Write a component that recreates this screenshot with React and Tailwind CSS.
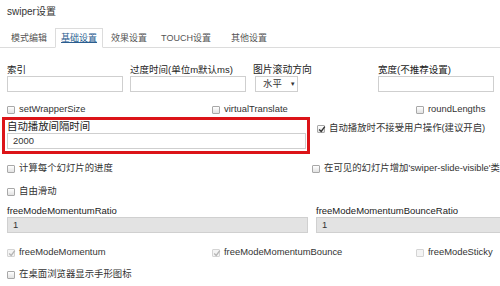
import React from 'react';

const font = { fontFamily: '"Liberation Sans", "Noto Sans CJK SC", sans-serif' };

function Box({ checked, disabled }) {
  return (
    <span
      className={
        'relative inline-block w-[8px] h-[8px] shrink-0 rounded-[1px] border ' +
        (disabled ? 'border-[#d4d4d4] bg-[#f4f4f4]' : 'border-[#a8a8a8] bg-gradient-to-b from-white to-[#e2e2e2]')
      }
    >
      {checked && (
        <svg viewBox="0 0 10 10" className="absolute left-[0px] top-[-1px] w-[8px] h-[8px]">
          <path
            d="M1.5 5.5 L4 8 L8.5 2"
            fill="none"
            stroke={disabled ? '#b5b5b5' : '#333'}
            strokeWidth="1.7"
          />
        </svg>
      )}
    </span>
  );
}

function Check({ label, checked, disabled, className = '' }) {
  return (
    <div className={'flex items-center h-[13px] ' + className}>
      <Box checked={checked} disabled={disabled} />
      <span className="ml-[4px] whitespace-nowrap text-[9.4px] text-[#333]">{label}</span>
    </div>
  );
}

function Field({ label, w, value, disabled, className = '' }) {
  return (
    <div className={className}>
      <div className="h-[12px] leading-[12px] text-[9.5px] text-[#222] whitespace-nowrap">{label}</div>
      <div
        className={
          'h-[16px] border leading-[14px] pl-[5px] text-[9.4px] text-[#333] ' +
          (disabled ? 'bg-[#e3e3e3] border-[#d0d0d0]' : 'bg-white border-[#cfcfcf]')
        }
        style={{ width: w }}
      >
        {value}
      </div>
    </div>
  );
}

export default function App() {
  const tabs = ['模式编辑', '基础设置', '效果设置', 'TOUCH设置', '其他设置'];
  return (
    <div className="w-[500px] h-[286px] overflow-hidden bg-white text-[#333]" style={font}>
      <div className="h-[28px] pt-[5px] pl-[7px] leading-[14px] text-[10px] text-[#333]">swiper设置</div>

      <ul className="flex h-[20px] border-b border-[#dcdcdc] pl-[5px]">
        {tabs.map((t, i) => (
          <li
            key={t}
            className={
              'h-[20px] mb-[-1px] mr-[2px] px-[5px] leading-[18px] text-[9px] whitespace-nowrap border ' +
              (i === 1
                ? 'border-[#dcdcdc] border-b-white bg-white text-[#2a5d8f] underline'
                : 'border-transparent text-[#555]') +
              (i === 3 ? ' mr-[8px]' : '')
            }
          >
            {t}
          </li>
        ))}
      </ul>

      <div className="flex mt-[16px] pl-[7px]">
        <Field label="索引" w="116px" className="w-[123px]" />
        <Field label="过度时间(单位m默认ms)" w="116px" className="w-[123px]" />
        <div className="w-[125px]">
          <div className="h-[12px] leading-[12px] text-[9.8px] text-[#222]">图片滚动方向</div>
          <div className="ml-[2px] flex items-center w-[43px] h-[16px] border border-[#cfcfcf] bg-white text-[9.4px]">
            <span className="ml-[7px]">水平</span>
            <span className="ml-[8px] text-[6px]">▼</span>
          </div>
        </div>
        <Field label="宽度(不推荐设置)" w="116px" />
      </div>

      <div className="flex mt-[11px] pl-[7px]">
        <Check label="setWrapperSize" className="w-[205px]" />
        <Check label="virtualTranslate" className="w-[204px]" />
        <Check label="roundLengths" />
      </div>

      <div className="flex mt-[1px]">
        <div className="ml-[2px] w-[308px] h-[37px] border-[3px] border-[#dc1418] pl-[2px]">
          <div className="h-[13px] leading-[13px] text-[10.4px] text-[#222] whitespace-nowrap">自动播放间隔时间</div>
          <div className="w-[299px] h-[16px] border border-[#cfcfcf] bg-white pl-[5px] leading-[14px] text-[9.4px]">
            2000
          </div>
        </div>
        <div className="ml-[7px] mt-[5px]">
          <Check label="自动播放时不接受用户操作(建议开启)" checked />
        </div>
      </div>

      <div className="flex mt-[8px] pl-[7px]">
        <Check label="计算每个幻灯片的进度" className="w-[311px]" />
        <Check label="在可见的幻灯片增加'swiper-slide-visible'类" />
      </div>

      <div className="flex mt-[10px] pl-[7px]">
        <Check label="自由滑动" />
      </div>

      <div className="flex mt-[7px] pl-[7px]">
        <Field label="freeModeMomentumRatio" w="301px" value="1" disabled className="w-[309px] shrink-0" />
        <Field label="freeModeMomentumBounceRatio" w="301px" value="1" disabled className="shrink-0" />
      </div>

      <div className="flex mt-[13px] pl-[7px]">
        <Check label="freeModeMomentum" checked disabled className="w-[205px]" />
        <Check label="freeModeMomentumBounce" checked disabled className="w-[204px]" />
        <Check label="freeModeSticky" disabled />
      </div>

      <div className="flex mt-[9px] pl-[7px]">
        <Check label="在桌面浏览器显示手形图标" />
      </div>
    </div>
  );
}
